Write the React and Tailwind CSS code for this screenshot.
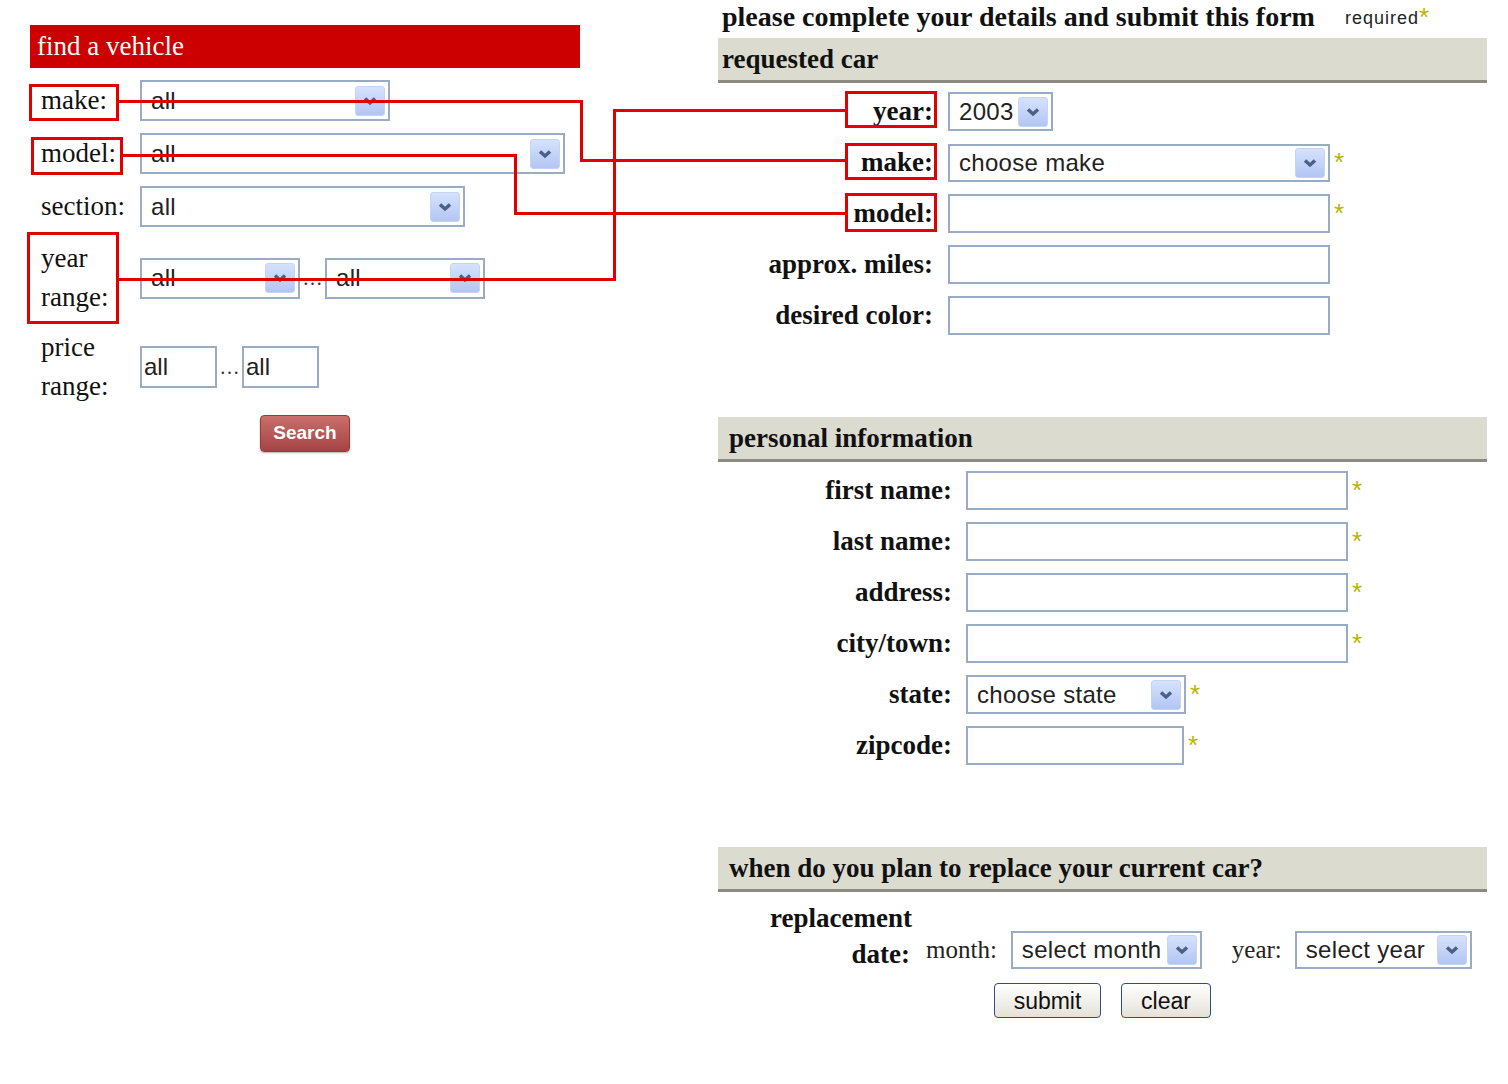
import React from "react";

const SERIF = "font-['Liberation_Serif','Times_New_Roman',serif]";
const SANS = "font-['Liberation_Sans',Arial,sans-serif]";

function Arrow() {
  return (
    <span className="flex h-[30px] w-[30px] shrink-0 items-center justify-center rounded-[3px] border border-[#c6d4f4] bg-linear-to-b from-[#d6e2fd] to-[#b2c6f3]">
      <svg width="14" height="10" viewBox="0 0 14 10">
        <path d="M2 2.5l5 4.5 5-4.5" fill="none" stroke="#4b6089" strokeWidth="3.5" />
      </svg>
    </span>
  );
}

function Select({ width, height = "h-[41px]", text }) {
  return (
    <div
      className={`flex ${width} ${height} shrink-0 items-center justify-between border-2 border-[#98acc6] bg-white pl-[9px] pr-[3px] ${SANS} text-[24px] text-[#222]`}
    >
      <span className="tracking-[0.3px]">{text}</span>
      <Arrow />
    </div>
  );
}

function Input({ width, height = "h-[39px]", text }) {
  return (
    <div
      className={`flex ${width} ${height} shrink-0 items-center border-2 border-[#98acc6] bg-white pl-[2px] ${SANS} text-[24px] text-[#222]`}
    >
      {text}
    </div>
  );
}

function Star() {
  return (
    <span className={`ml-[4px] mt-[6px] self-start text-[26px] leading-none text-[#b8b400] ${SANS}`}>*</span>
  );
}

function LeftRow({ label, children, className = "" }) {
  return (
    <div className={`flex items-center ${className}`}>
      <div className={`w-[110px] pl-[11px] ${SERIF} text-[27px] leading-[39px] text-[#111]`}>{label}</div>
      {children}
    </div>
  );
}

function Bar({ children, pad = "pl-[11px]" }) {
  return (
    <div
      className={`flex h-[45px] items-center border-b-[3px] border-[#8b8b82] bg-[#dcdbd0] ${pad} ${SERIF} text-[27px] font-bold text-[#111]`}
    >
      {children}
    </div>
  );
}

function CarRow({ label, children }) {
  return (
    <div className="flex h-[39px] items-center">
      <div className={`w-[219px] pr-[4px] text-right ${SERIF} text-[27px] font-bold text-[#111]`}>{label}</div>
      <div className="ml-[11px] flex h-full items-center">{children}</div>
    </div>
  );
}

function PersonRow({ label, children }) {
  return (
    <div className="flex h-[39px] items-center">
      <div className={`w-[237px] pr-[3px] text-right ${SERIF} text-[27px] font-bold text-[#111]`}>{label}</div>
      <div className="ml-[11px] flex h-full items-center">{children}</div>
    </div>
  );
}

function Dots() {
  return <span className={`w-[25px] text-center ${SERIF} text-[20px] leading-none text-[#333]`}>…</span>;
}

function Overlay() {
  const red = "#e00000";
  return (
    <svg className="pointer-events-none absolute left-0 top-0" width="1508" height="1084">
      <g fill="none" stroke={red} strokeWidth="3">
        <rect x="30.5" y="85.5" width="87" height="34" />
        <rect x="32.5" y="138.5" width="89" height="35" />
        <rect x="28.5" y="233.5" width="89" height="89" />
        <rect x="846.5" y="92.5" width="89" height="34" />
        <rect x="846.5" y="144.5" width="89" height="34" />
        <rect x="846.5" y="194.5" width="89" height="36" />
        <path d="M118 101.5H581.5V160.5H845" />
        <path d="M123 155.5H515.5V213.5H845" />
        <path d="M119 279.5H614.5V110.5H845" />
      </g>
    </svg>
  );
}

export default function App() {
  return (
    <div className="relative flex h-[1084px] w-[1508px] overflow-hidden bg-white">
      {/* find a vehicle */}
      <div className="w-[718px] shrink-0 pl-[30px] pt-[25px]">
        <div className={`flex h-[43px] w-[550px] items-center bg-[#cc0000] pl-[7px] ${SERIF} text-[27px] text-white`}>
          find a vehicle
        </div>
        <div className="w-[550px]">
          <LeftRow label="make:" className="mt-[12px]">
            <Select width="w-[250px]" text="all" />
          </LeftRow>
          <LeftRow label="model:" className="mt-[12px]">
            <Select width="w-[425px]" text="all" />
          </LeftRow>
          <LeftRow label="section:" className="mt-[12px]">
            <Select width="w-[325px]" text="all" />
          </LeftRow>
          <LeftRow
            className="mt-[12px] h-[78px]"
            label={
              <>
                year
                <br />
                range:
              </>
            }
          >
            <Select width="w-[160px]" text="all" />
            <Dots />
            <Select width="w-[160px]" text="all" />
          </LeftRow>
          <LeftRow
            className="mt-[10px] h-[80px]"
            label={
              <>
                price
                <br />
                range:
              </>
            }
          >
            <Input width="w-[77px]" height="h-[42px]" text="all" />
            <Dots />
            <Input width="w-[77px]" height="h-[42px]" text="all" />
          </LeftRow>
          <div className="mt-[8px] flex justify-center">
            <button
              className={`h-[37px] w-[90px] rounded-[4px] border border-[#8e3f3d] bg-linear-to-b from-[#c96f6c] to-[#a44442] ${SANS} text-[19px] font-bold text-white shadow-[0_1px_2px_rgba(0,0,0,0.3)]`}
            >
              Search
            </button>
          </div>
        </div>
      </div>

      {/* request form */}
      <div className="w-[769px] shrink-0">
        <div className="flex h-[38px] items-center pb-[5px] pl-[4px]">
          <span className={`${SERIF} text-[28px] font-bold text-[#111]`}>
            please complete your details and submit this form
          </span>
          <span className={`ml-[30px] mt-[4px] ${SANS} text-[18px] tracking-[1px] text-[#222]`}>required</span>
          <span className={`mt-[4px] self-start text-[26px] leading-none text-[#b8b400] ${SANS}`}>*</span>
        </div>

        <Bar pad="pl-[4px]">requested car</Bar>
        <div className="mt-[9px] flex flex-col gap-[12px]">
          <CarRow label="year:">
            <Select width="w-[105px]" height="h-[39px]" text="2003" />
          </CarRow>
          <CarRow label="make:">
            <Select width="w-[382px]" height="h-[38px]" text="choose make" />
            <Star />
          </CarRow>
          <CarRow label="model:">
            <Input width="w-[382px]" />
            <Star />
          </CarRow>
          <CarRow label="approx. miles:">
            <Input width="w-[382px]" />
          </CarRow>
          <CarRow label="desired color:">
            <Input width="w-[382px]" />
          </CarRow>
        </div>

        <div className="mt-[82px]">
          <Bar>personal information</Bar>
        </div>
        <div className="mt-[9px] flex flex-col gap-[12px]">
          <PersonRow label="first name:">
            <Input width="w-[382px]" />
            <Star />
          </PersonRow>
          <PersonRow label="last name:">
            <Input width="w-[382px]" />
            <Star />
          </PersonRow>
          <PersonRow label="address:">
            <Input width="w-[382px]" />
            <Star />
          </PersonRow>
          <PersonRow label="city/town:">
            <Input width="w-[382px]" />
            <Star />
          </PersonRow>
          <PersonRow label="state:">
            <Select width="w-[220px]" height="h-[39px]" text="choose state" />
            <Star />
          </PersonRow>
          <PersonRow label="zipcode:">
            <Input width="w-[218px]" />
            <Star />
          </PersonRow>
        </div>

        <div className="mt-[82px]">
          <Bar>when do you plan to replace your current car?</Bar>
        </div>
        <div className="mt-[8px] flex items-end">
          <div className={`w-[194px] text-right ${SERIF} text-[27px] font-bold leading-[36px] text-[#111]`}>
            replacement
            <br />
            <span className="pr-[2px]">date:</span>
          </div>
          <div className="mb-[3px] flex items-center">
            <span className={`ml-[14px] ${SERIF} text-[25px] text-[#222]`}>month:</span>
            <div className="ml-[14px]">
              <Select width="w-[191px]" height="h-[38px]" text="select month" />
            </div>
            <span className={`ml-[30px] ${SERIF} text-[25px] text-[#222]`}>year:</span>
            <div className="ml-[13px]">
              <Select width="w-[177px]" height="h-[38px]" text="select year" />
            </div>
          </div>
        </div>
        <div className="mt-[11px] flex justify-center gap-[20px]">
          <button
            className={`h-[35px] w-[107px] rounded-[4px] border border-[#2b4f7e] bg-linear-to-b from-white to-[#e4e2d8] ${SANS} text-[23px] text-[#111]`}
          >
            submit
          </button>
          <button
            className={`h-[35px] w-[90px] rounded-[4px] border border-[#2b4f7e] bg-linear-to-b from-white to-[#e4e2d8] ${SANS} text-[23px] text-[#111]`}
          >
            clear
          </button>
        </div>
      </div>

      <Overlay />
    </div>
  );
}
